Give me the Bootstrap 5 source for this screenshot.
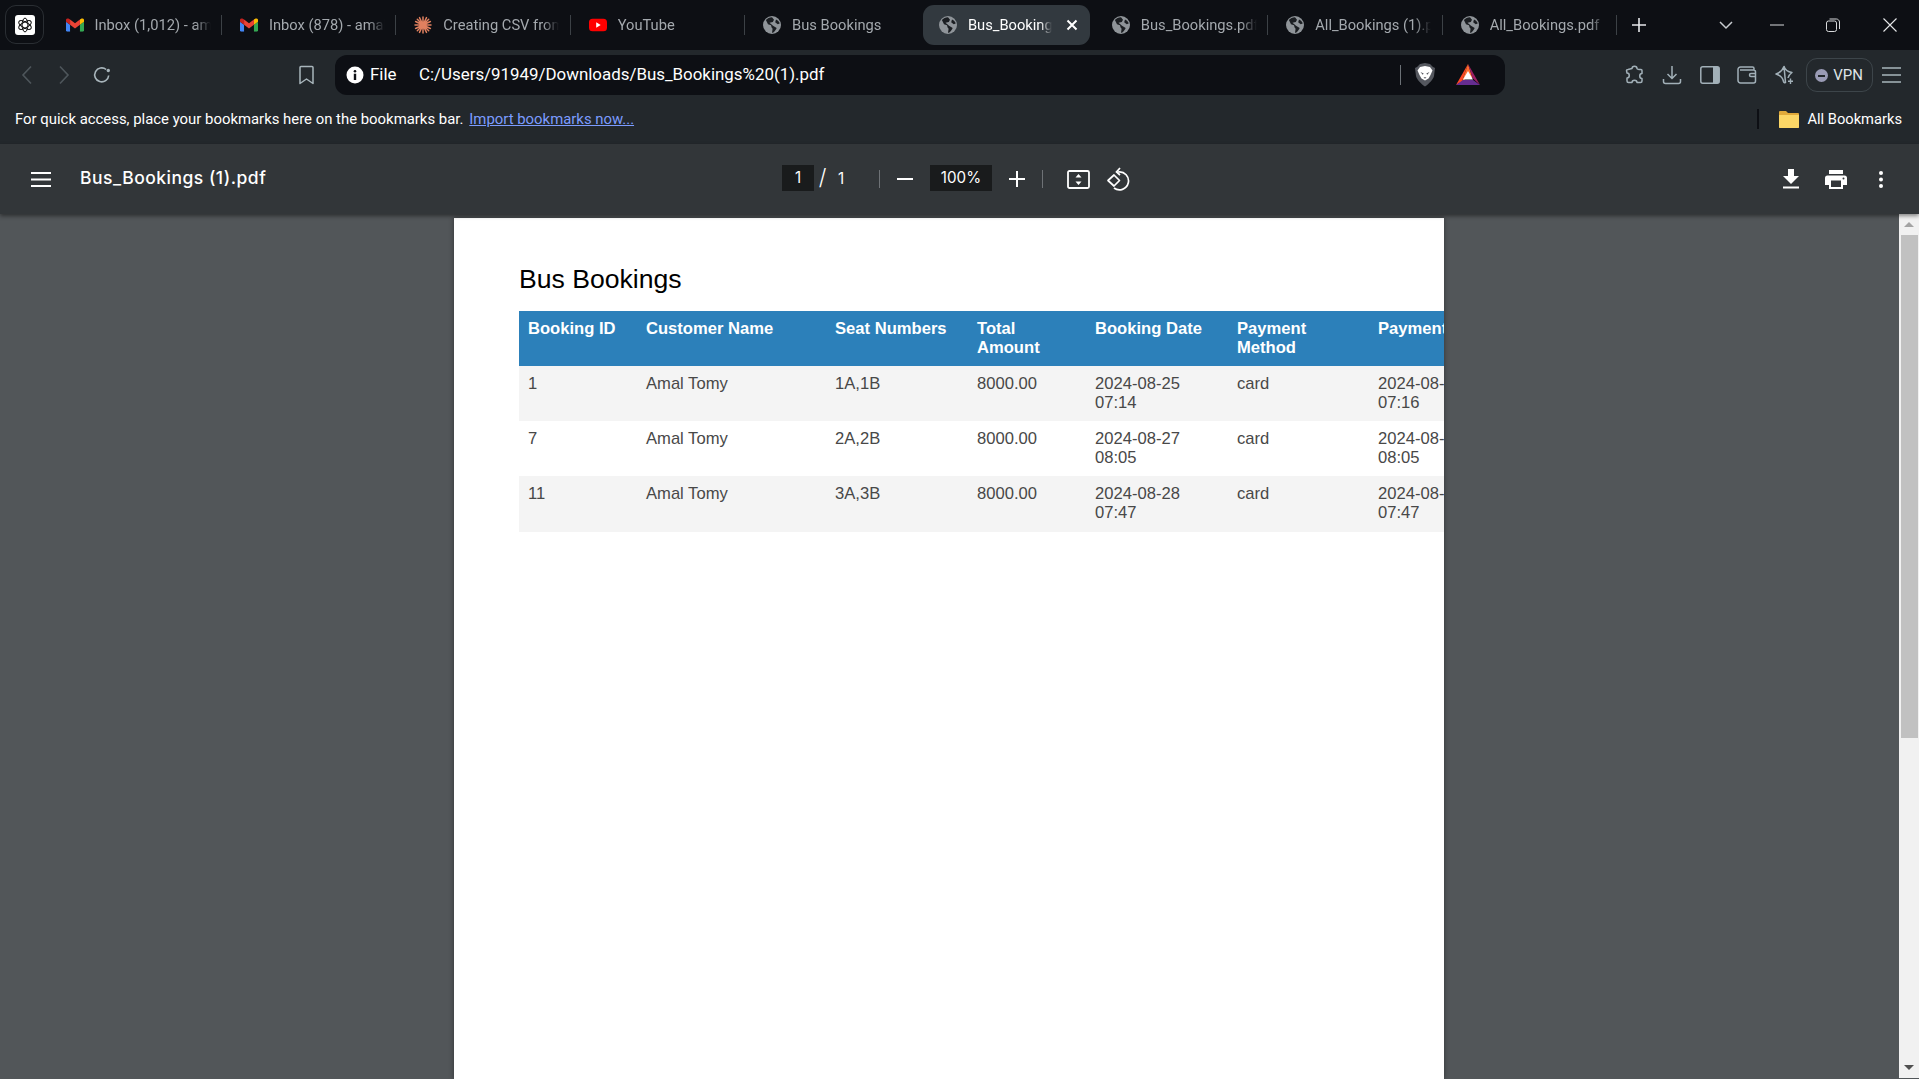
<!DOCTYPE html>
<html lang="en">
<head>
    <meta charset="UTF-8">
    <meta name="viewport" content="width=device-width, initial-scale=1">
    <title>Bus_Bookings (1).pdf</title>
    <link href="https://cdn.jsdelivr.net/npm/bootstrap@5.3.3/dist/css/bootstrap.min.css" rel="stylesheet">
    <style>
        html, body { height: 100%; overflow: hidden; }
        body { background: #525659; font-family: Roboto, "Liberation Sans", sans-serif; }
        .app-shell { height: 1079px; }

        /* tab strip */
        .tab-strip { height: 50px; background: #0d0f14; color: #a4a9ae; font-size: 14.7px; }
        .pinned-tab { width: 39px; height: 39px; margin: 5px 3.5px 0 5px; border: 1px solid #2a2e33; border-radius: 11px; }
        .pinned-face { width: 20px; height: 20px; background: #fff; border-radius: 3px; }
        .chr-tab { width: 174.4px; height: 40px; margin-top: 5px; padding-left: 18px; position: relative; }
        .chr-tab svg { width: 18px; height: 18px; flex-shrink: 0; }
        .chr-label { width: 116px; margin-left: 11px; overflow: hidden; white-space: nowrap; -webkit-mask-image: linear-gradient(90deg, #000 86%, transparent 100%); mask-image: linear-gradient(90deg, #000 86%, transparent 100%); }
        .chr-sep { position: absolute; right: 0; top: 10px; width: 1px; height: 20px; background: #3c4146; }
        .chr-tab.is-active::before { content: ""; position: absolute; left: 3.5px; right: 3.5px; top: 0; bottom: 0; background: #32393f; border-radius: 11px; }
        .chr-tab.is-active > * { position: relative; }
        .chr-tab.is-active { color: #fff; padding-left: 19.5px; }
        .chr-tab.is-active .chr-label { width: 84px; }
        .chr-tab.is-active .chr-x { margin-left: 11px; }
        .win-btn { width: 56px; height: 50px; }
        .win-btn.is-close { width: 58px; }

        /* address row */
        .nav-row { height: 46px; background: #23282c; padding-left: 8px; }
        .nav-btn { width: 37.5px; height: 40px; margin-top: 5px; }
        .nav-book { margin-left: 167px; }
        .url-bar { width: 1170px; height: 40px; margin: 5px 0 0 10px; background: #0d0f14; border-radius: 12px; color: #fff; font-size: 16.9px; padding-left: 11px; padding-right: 25px; }
        .url-file { margin-left: 6px; width: 49px; }
        .url-rule { width: 1px; height: 20px; background: #6b7176; margin-right: 14px; }
        .nav-right { margin-left: 111px; }
        .vpn-chip { width: 67px; height: 34px; margin: 8px 0 0 2px; padding-top: 1px; border: 1px solid #3d454a; border-radius: 11px; color: #dfe4e7; font-size: 15px; gap: 5px; }
        .vpn-dot { width: 13px; height: 13px; background: #9a9bb5; border-radius: 50%; position: relative; }
        .vpn-dot::after { content: ""; position: absolute; left: 3px; right: 3px; top: 5.5px; height: 2px; background: #23282c; }

        /* bookmarks row */
        .marks-row { height: 48px; padding: 0 17px 2px 15px; background: #23282c; color: #fff; font-size: 14.9px; }
        .marks-link { color: #7c9cff; margin-left: 6px; }
        .marks-rule { width: 2px; height: 20px; background: #0d0f14; margin-right: 20px; }
        .marks-folder { margin-right: 8px; }
        .marks-all { font-size: 14.7px; }

        /* pdf viewer */
        .pdf-bar { height: 70px; background: #323639; color: #fff; box-shadow: 0 2px 4px rgba(0,0,0,.45); position: relative; z-index: 2; }
        .pdf-menu { width: 80px; padding-left: 31px; }
        .pdf-name { width: 702px; font-family: Inter, sans-serif; font-weight: 500; font-size: 17.5px; letter-spacing: .5px; margin-top: -2px; }
        .pdf-num { font-family: Inter, sans-serif; font-size: 15.2px; }
        .pdf-field { height: 26px; background: #191b1c; margin-top: -2px; }
        .pdf-field.is-page { width: 32px; }
        .pdf-field.is-zoom { width: 62px; }
        .pdf-slash { width: 17px; text-align: center; font-family: Inter, sans-serif; font-size: 22px; font-weight: 300; margin-top: -3px; }
        .pdf-total { width: 20px; text-align: center; margin-right: 28px; }
        .pdf-rule { width: 1px; height: 18px; background: #6e7276; }
        .pdf-zoom-btn { width: 50px; }
        .pdf-rotate { margin-left: 16px; }
        .pdf-right { margin-left: auto; padding-right: 16px; }
        .pdf-act { width: 45px; }

        .viewer-area { height: 865px; }
        .viewer-pages { padding-top: 4px; overflow: hidden; }
        .pdf-sheet { width: 990px; height: 861px; margin-right: 1px; background: #fff; padding: 26px 0 0 65px; overflow: hidden; box-shadow: 0 0 5px rgba(0,0,0,.4); font-family: "Liberation Sans", Arial, sans-serif; }
        .pdf-heading { font-size: 26.6px; line-height: 34px; color: #000; margin: 18px 0 15px; font-weight: 400; }
        .booking-grid { width: 1200px; table-layout: fixed; font-size: 16.6px; line-height: 19px; margin: 0; --bs-table-color: #484848; --bs-table-striped-color: #484848; --bs-table-striped-bg: #f4f4f4; --bs-table-bg: #fff; }
        .booking-grid th, .booking-grid td { padding: 8px 9px 9px; border: 0; vertical-align: top; }
        .booking-grid tbody tr:last-child td { padding-bottom: 10px; }
        .booking-grid thead th { background: #2c80ba; color: #fff; font-weight: 700; box-shadow: none; }
        .pdf-scroll { width: 20px; height: 864px; background: #f1f1f1; }
        .scroll-btn { height: 21px; }
        .scroll-up { width: 0; height: 0; border: 5px solid transparent; border-top: 0; border-bottom: 5px solid #a3a3a3; }
        .scroll-down { width: 0; height: 0; border: 5px solid transparent; border-bottom: 0; border-top: 5px solid #505050; }
        .scroll-thumb { width: 17px; height: 503px; margin-left: 2px; background: #c1c1c1; }
        .bottom-edge { height: 1px; background: #000; }
    </style>
</head>
<body>
<svg width="0" height="0" class="d-block" style="position:absolute">
    <defs>
        <symbol id="gmail" viewBox="0 0 24 18">
            <path d="M1.6 18h3.8V8.6L0 4.6V16.400c0 .9.7 1.600 1.600 1.600z" fill="#4285f4"/>
            <path d="M18.600 18h3.800c.9 0 1.600-.7 1.600-1.600V4.600l-5.400 4z" fill="#34a853"/>
            <path d="M18.600 1.600v7l5.400-4V2.400c0-2-2.300-3.100-3.800-1.900z" fill="#fbbc04"/>
            <path d="M5.400 8.600v-7L12 6.500l6.600-4.900v7L12 13.500z" fill="#ea4335"/>
            <path d="M0 2.400v2.200l5.400 4v-7L3.800.5C2.300-.7 0 .4 0 2.400z" fill="#c5221f"/>
        </symbol>
        <symbol id="globe" viewBox="0 0 18 18">
            <circle cx="9" cy="9" r="9" fill="#8f9499"/>
            <path d="M9 1.200C6.500 1.200 4.300 2.300 2.900 4.100L5 8.200l3 1 .6 2.300 1 1.300-.6 3.900h1c1.800-1 2.900-3 3.700-4.700L10 9.700 8 8 6.500 6.700 9.800 6l1.200-2.200z" fill="#1b1e22"/>
            <path d="M13 3.500l-.8 2.700 2.500 2 2-.6C16.300 5.800 15 4.300 13 3.500z" fill="#1b1e22"/>
        </symbol>
    </defs>
</svg>

<div class="app-shell d-flex flex-column">
    <div class="tab-strip d-flex align-items-start flex-shrink-0">
        <div class="pinned-tab d-flex align-items-center justify-content-center flex-shrink-0">
            <div class="pinned-face d-flex align-items-center justify-content-center">
                <svg width="16" height="16" viewBox="0 0 16 16" fill="none" stroke="#111" stroke-width="1">
                    <ellipse cx="8" cy="8" rx="2.900" ry="6.900"/>
                    <ellipse cx="8" cy="8" rx="2.900" ry="6.900" transform="rotate(60 8 8)"/>
                    <ellipse cx="8" cy="8" rx="2.900" ry="6.900" transform="rotate(120 8 8)"/>
                </svg>
            </div>
        </div>
        <div class="chr-tab d-flex align-items-center">
            <svg viewBox="0 0 24 18"><use href="#gmail"/></svg>
            <span class="chr-label">Inbox (1,012) - amal</span><span class="chr-sep"></span>
        </div>
        <div class="chr-tab d-flex align-items-center">
            <svg viewBox="0 0 24 18"><use href="#gmail"/></svg>
            <span class="chr-label">Inbox (878) - amal</span><span class="chr-sep"></span>
        </div>
        <div class="chr-tab d-flex align-items-center">
            <svg viewBox="0 0 18 18" stroke="#e0805f" stroke-width="1.500" stroke-linecap="round">
                <path d="M9 1v16M1 9h16M3.300 3.300l11.400 11.400M14.700 3.300L3.300 14.700M5.500 1.600l7 14.800M12.500 1.600l-7 14.800M1.600 5.500l14.800 7M16.400 5.500l-14.800 7"/>
            </svg>
            <span class="chr-label">Creating CSV from</span><span class="chr-sep"></span>
        </div>
        <div class="chr-tab d-flex align-items-center">
            <svg viewBox="0 0 20 14"><rect width="20" height="14" rx="4" fill="#f00"/><path d="M8 4l5 3-5 3z" fill="#fff"/></svg>
            <span class="chr-label">YouTube</span><span class="chr-sep"></span>
        </div>
        <div class="chr-tab d-flex align-items-center">
            <svg viewBox="0 0 18 18"><use href="#globe"/></svg>
            <span class="chr-label">Bus Bookings</span>
        </div>
        <div class="chr-tab is-active d-flex align-items-center">
            <svg viewBox="0 0 18 18"><use href="#globe"/></svg>
            <span class="chr-label">Bus_Bookings (1).pdf</span>
            <svg class="chr-x" viewBox="0 0 18 18" fill="none" stroke="#fff" stroke-width="2"><path d="M4.500 4.500l9 9M13.500 4.500l-9 9"/></svg>
        </div>
        <div class="chr-tab d-flex align-items-center">
            <svg viewBox="0 0 18 18"><use href="#globe"/></svg>
            <span class="chr-label">Bus_Bookings.pdf</span><span class="chr-sep"></span>
        </div>
        <div class="chr-tab d-flex align-items-center">
            <svg viewBox="0 0 18 18"><use href="#globe"/></svg>
            <span class="chr-label">All_Bookings (1).pdf</span><span class="chr-sep"></span>
        </div>
        <div class="chr-tab d-flex align-items-center">
            <svg viewBox="0 0 18 18"><use href="#globe"/></svg>
            <span class="chr-label">All_Bookings.pdf</span><span class="chr-sep"></span>
        </div>
        <div class="d-flex align-items-center justify-content-center flex-shrink-0" style="width:44px;height:50px">
            <svg width="14" height="14" viewBox="0 0 14 14" stroke="#e6e8ea" stroke-width="1.600"><path d="M7 0v14M0 7h14"/></svg>
        </div>
        <div class="d-flex align-items-center justify-content-center" style="margin-left:53px;width:24px;height:50px">
            <svg width="14" height="9" viewBox="0 0 14 9" fill="none" stroke="#c8ccd0" stroke-width="1.500"><path d="M1 1l6 6 6-6"/></svg>
        </div>
        <div class="win-btn d-flex align-items-center justify-content-center" style="margin-left:11px">
            <svg width="14" height="2" viewBox="0 0 14 2" stroke="#d8dadc"><path d="M0 1h14"/></svg>
        </div>
        <div class="win-btn d-flex align-items-center justify-content-center">
            <svg width="14" height="14" viewBox="0 0 14 14" fill="none" stroke="#d8dadc"><rect x=".5" y="3" width="10" height="10.500" rx="2"/><path d="M3.500 1h7c1.500 0 3 1.500 3 3v7"/></svg>
        </div>
        <div class="win-btn is-close d-flex align-items-center justify-content-center">
            <svg width="14" height="14" viewBox="0 0 14 14" stroke="#e6e8ea" stroke-width="1.100"><path d="M.5.5l13 13M13.500.5l-13 13"/></svg>
        </div>
    </div>

    <div class="nav-row d-flex align-items-start flex-shrink-0">
        <div class="nav-btn d-flex align-items-center justify-content-center">
            <svg width="12" height="20" viewBox="0 0 12 20" fill="none" stroke="#4e565b" stroke-width="1.600"><path d="M10 1.500L2 10l8 8.500"/></svg>
        </div>
        <div class="nav-btn d-flex align-items-center justify-content-center">
            <svg width="12" height="20" viewBox="0 0 12 20" fill="none" stroke="#4e565b" stroke-width="1.600"><path d="M2 1.500L10 10l-8 8.500"/></svg>
        </div>
        <div class="nav-btn d-flex align-items-center justify-content-center">
            <svg width="20" height="20" viewBox="0 0 20 20" fill="none" stroke="#a8b5bb" stroke-width="1.600"><path d="M16.700 10.500a7 7 0 1 1-2.500-6"/><circle cx="16.300" cy="5.500" r="1.700" fill="#a8b5bb" stroke="none"/></svg>
        </div>
        <div class="nav-btn nav-book d-flex align-items-center justify-content-center">
            <svg width="15" height="20" viewBox="0 0 15 20" fill="none" stroke="#a8b5bb" stroke-width="1.500" stroke-linejoin="round"><path d="M2 1.500h11a1 1 0 0 1 1 1V18.500l-6.500-4.500L1 18.500V2.500a1 1 0 0 1 1-1z"/></svg>
        </div>
        <div class="url-bar d-flex align-items-center">
            <svg width="18" height="18" viewBox="0 0 18 18"><circle cx="9" cy="9" r="8.500" fill="#fff"/><circle cx="9" cy="5.200" r="1.300" fill="#0d0f14"/><rect x="7.800" y="7.700" width="2.400" height="6.300" fill="#0d0f14"/></svg>
            <span class="url-file">File</span>
            <span class="text-nowrap">C:/Users/91949/Downloads/Bus_Bookings%20(1).pdf</span>
            <span class="url-rule ms-auto"></span>
            <svg width="20" height="24" viewBox="0 0 20 24">
                <path d="M5 1l5-1 5 1 3 3 2 1-1 8c-.5 3-5 8-9 10.500C6 21 1.500 16 1 13L0 5l2-1z" fill="#55585f"/>
                <path d="M5 4l5-1 5 1 2.500 3.500-2 4.500-2 3.500-3.500 2-3.500-2-2-3.500-2-4.500z" fill="#fff"/>
                <path d="M5.500 9l3.200 1.500-1 1.300zM14.500 9l-3.200 1.500 1 1.300zM8.500 14.300h3l-1.500 1.500z" fill="#55585f"/>
            </svg>
            <svg width="24" height="24" viewBox="0 0 24 24" style="margin-left:21px">
                <path d="M12 1L0 22l6-3.500L12 1z" fill="#ff4724"/>
                <path d="M12 1L6 18.500 12 14l4.500 1z" fill="#ff6d2e"/>
                <path d="M12 1l12 21-7.500-7z" fill="#9e1f63"/>
                <path d="M0 22h24l-7-5H7z" fill="#662d91"/>
                <path d="M12 8l5 8.500H7z" fill="#fff"/>
            </svg>
        </div>
        <div class="nav-btn nav-right d-flex align-items-center justify-content-center">
            <svg width="20" height="20" viewBox="0 0 20 20" fill="none" stroke="#a2b0b8" stroke-width="1.500" stroke-linejoin="round"><path d="M7 3.500c0-3 5-3 5 0 0 .7 3 1 4 1 .5 0 1 .5 1 1v3c-3 0-3 5 0 5v2.500c0 1-.5 1.500-1.500 1.500H12c0-3-5-3-5 0H3.500c-1 0-1.500-.5-1.500-1.500V13c3 0 3-5 0-5l-.5-2.500c0-.7 1-1 1.500-1z"/></svg>
        </div>
        <div class="nav-btn d-flex align-items-center justify-content-center">
            <svg width="20" height="20" viewBox="0 0 20 20" fill="none" stroke="#a2b0b8" stroke-width="1.500"><path d="M10 1v12M5.500 9l4.500 4.500L14.500 9M1.500 14v2.500a2 2 0 0 0 2 2h13a2 2 0 0 0 2-2V14"/></svg>
        </div>
        <div class="nav-btn d-flex align-items-center justify-content-center">
            <svg width="20" height="18" viewBox="0 0 20 18"><rect x=".8" y=".8" width="18.400" height="16.400" rx="2" fill="none" stroke="#a2b0b8" stroke-width="1.500"/><path d="M13 1h5a1 1 0 0 1 1 1v14a1 1 0 0 1-1 1h-5z" fill="#a2b0b8"/></svg>
        </div>
        <div class="nav-btn d-flex align-items-center justify-content-center">
            <svg width="20" height="18" viewBox="0 0 20 18" fill="none" stroke="#a2b0b8" stroke-width="1.500"><path d="M17 4V2.500A1.500 1.500 0 0 0 15.500 1h-12A2.500 2.500 0 0 0 1 3.500v11A2.500 2.500 0 0 0 3.500 17h13a2 2 0 0 0 2-2V6a2 2 0 0 0-2-2H3"/><path d="M19 7.500h-5a1.500 1.500 0 0 0 0 3h5"/></svg>
        </div>
        <div class="nav-btn d-flex align-items-center justify-content-center">
            <svg width="20" height="20" viewBox="0 0 20 20" fill="none" stroke="#a2b0b8" stroke-width="1.500" stroke-linejoin="round"><path d="M9 1.500Q10.500 6.500 17 7.500Q13.500 10 13 13M10.500 17.500Q9 18 8.500 16.500Q7.500 11 1 9Q7 7 9 1.500z"/><path d="M15.500 13.500v5.500M13 16.200h5" stroke-width="1.400"/></svg>
        </div>
        <div class="vpn-chip d-flex align-items-center justify-content-center">
            <span class="vpn-dot"></span><span>VPN</span>
        </div>
        <div class="nav-btn d-flex align-items-center justify-content-center" style="width:38px">
            <svg width="19" height="16" viewBox="0 0 19 16" stroke="#a8b5bb" stroke-width="1.400"><path d="M0 1h19M0 8h19M0 15h19"/></svg>
        </div>
    </div>

    <div class="marks-row d-flex align-items-center flex-shrink-0">
        <span>For quick access, place your bookmarks here on the bookmarks bar.</span>
        <a href="#" class="marks-link">Import bookmarks now...</a>
        <span class="marks-rule ms-auto"></span>
        <svg class="marks-folder" width="20" height="17" viewBox="0 0 20 17"><path d="M1 0h6l2 2h10a1 1 0 0 1 1 1v13a1 1 0 0 1-1 1H1a1 1 0 0 1-1-1V1a1 1 0 0 1 1-1z" fill="#e0a93a"/><path d="M0 4h20v12a1 1 0 0 1-1 1H1a1 1 0 0 1-1-1z" fill="#fbd666"/></svg>
        <span class="marks-all">All Bookmarks</span>
    </div>

    <div class="pdf-bar d-flex align-items-center flex-shrink-0">
        <div class="pdf-menu d-flex flex-shrink-0">
            <svg width="20" height="15" viewBox="0 0 20 15" stroke="#fff" stroke-width="2"><path d="M0 1h20M0 7.500h20M0 14h20"/></svg>
        </div>
        <div class="pdf-name flex-shrink-0">Bus_Bookings (1).pdf</div>
        <div class="pdf-field is-page pdf-num d-flex align-items-center justify-content-center">1</div>
        <div class="pdf-slash">/</div>
        <div class="pdf-total pdf-num">1</div>
        <div class="pdf-rule"></div>
        <div class="pdf-zoom-btn d-flex justify-content-center">
            <svg width="16" height="2" viewBox="0 0 16 2" stroke="#fff" stroke-width="2"><path d="M0 1h16"/></svg>
        </div>
        <div class="pdf-field is-zoom pdf-num d-flex align-items-center justify-content-center">100%</div>
        <div class="pdf-zoom-btn d-flex justify-content-center">
            <svg width="16" height="16" viewBox="0 0 16 16" stroke="#fff" stroke-width="2"><path d="M8 0v16M0 8h16"/></svg>
        </div>
        <div class="pdf-rule"></div>
        <svg class="ms-4" width="23" height="19" viewBox="0 0 23 19"><rect x="1" y="1" width="21" height="17" rx="1.500" fill="none" stroke="#fff" stroke-width="1.800"/><path d="M11.500 4l3 3.500h-6zM11.500 15l-3-3.500h6z" fill="#fff"/></svg>
        <svg class="pdf-rotate" width="24" height="24" viewBox="0 0 24 24" fill="none" stroke="#fff" stroke-width="1.700"><path d="M12 5a9 9 0 1 1-4 16"/><path d="M14 1l-3.500 4 3.500 3"/><path d="M8 8l5.500 5.500L8 19l-6-5.500z" stroke-linejoin="round"/></svg>
        <div class="pdf-right d-flex align-items-center">
            <div class="pdf-act d-flex justify-content-center">
                <svg width="16" height="20" viewBox="0 0 16 20" fill="#fff"><path d="M5 0h6v7h5l-8 8-8-8h5zM0 17.500h16V19.500H0z"/></svg>
            </div>
            <div class="pdf-act d-flex justify-content-center">
                <svg width="22" height="19" viewBox="0 0 22 19"><path d="M4 0h14v4H4zM2.500 5.500h17A2.500 2.500 0 0 1 22 8v7h-4v4H4v-4H0V8a2.500 2.500 0 0 1 2.500-2.500z" fill="#fff"/><rect x="6" y="10.500" width="10" height="6.500" fill="#323639"/><circle cx="18.500" cy="8.500" r="1" fill="#323639"/></svg>
            </div>
            <div class="pdf-act d-flex justify-content-center">
                <svg width="4" height="17" viewBox="0 0 4 17" fill="#fff"><circle cx="2" cy="2" r="2"/><circle cx="2" cy="8.500" r="2"/><circle cx="2" cy="15" r="2"/></svg>
            </div>
        </div>
    </div>

    <div class="viewer-area d-flex flex-grow-1">
        <div class="viewer-pages flex-grow-1 d-flex justify-content-center">
            <div class="pdf-sheet">
                <h1 class="pdf-heading">Bus Bookings</h1>
                <table class="table table-striped booking-grid">
                    <colgroup>
                        <col style="width:118px"><col style="width:189px"><col style="width:142px"><col style="width:118px"><col style="width:142px"><col style="width:141px"><col style="width:142px"><col style="width:208px">
                    </colgroup>
                    <thead>
                        <tr>
                            <th>Booking ID</th><th>Customer Name</th><th>Seat Numbers</th><th>Total Amount</th><th>Booking Date</th><th>Payment Method</th><th>Payment Date</th><th>Status</th>
                        </tr>
                    </thead>
                    <tbody>
                        <tr><td>1</td><td>Amal Tomy</td><td>1A,1B</td><td>8000.00</td><td>2024-08-25 07:14</td><td>card</td><td>2024-08-25 07:16</td><td>paid</td></tr>
                        <tr><td>7</td><td>Amal Tomy</td><td>2A,2B</td><td>8000.00</td><td>2024-08-27 08:05</td><td>card</td><td>2024-08-27 08:05</td><td>paid</td></tr>
                        <tr><td>11</td><td>Amal Tomy</td><td>3A,3B</td><td>8000.00</td><td>2024-08-28 07:47</td><td>card</td><td>2024-08-28 07:47</td><td>paid</td></tr>
                    </tbody>
                </table>
            </div>
        </div>
        <div class="pdf-scroll d-flex flex-column flex-shrink-0">
            <div class="scroll-btn d-flex align-items-center justify-content-center"><span class="scroll-up"></span></div>
            <div class="scroll-thumb"></div>
            <div class="scroll-btn mt-auto d-flex align-items-center justify-content-center"><span class="scroll-down"></span></div>
        </div>
    </div>
    <div class="bottom-edge flex-shrink-0"></div>
</div>
</body>
</html>
